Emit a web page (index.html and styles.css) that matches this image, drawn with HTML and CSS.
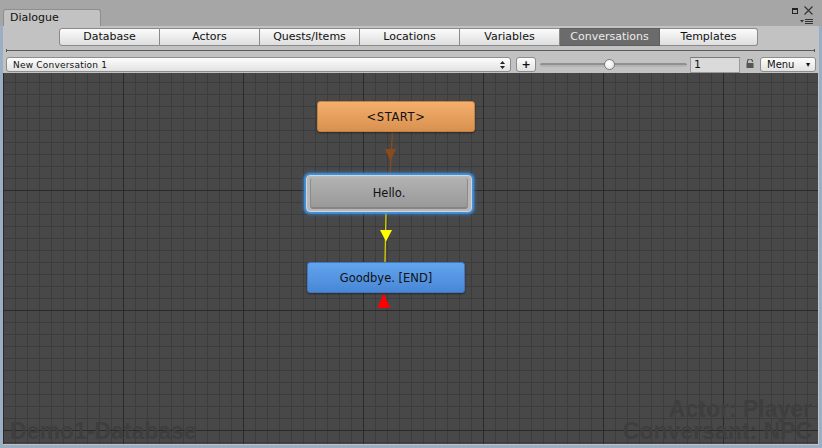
FILE: index.html
```html
<!DOCTYPE html>
<html>
<head>
<meta charset="utf-8">
<link rel="stylesheet" href="styles.css">
</head>
<body>
<div class="window">
  <div class="titlebar">
    <div class="wintab">Dialogue</div>
    <div class="winctl">
      <div class="ctl-top">
        <svg width="6" height="6" viewBox="0 0 6 6"><rect x="0.5" y="0.5" width="5" height="5" fill="none" stroke="#222"/><rect x="0" y="0" width="6" height="2" fill="#222"/></svg>
        <svg width="9" height="9" viewBox="0 0 9 9"><path d="M0.5 0.5 L8.5 8.5 M8.5 0.5 L0.5 8.5" stroke="#333" stroke-width="1.1"/></svg>
      </div>
      <div class="ctl-menu">
        <svg width="14" height="6" viewBox="0 0 14 6"><polygon points="0,1 4,1 2,3.5" fill="#333"/><rect x="5" y="0" width="8" height="1" fill="#333"/><rect x="5" y="2" width="8" height="1" fill="#333"/><rect x="5" y="4" width="8" height="1" fill="#333"/></svg>
      </div>
    </div>
  </div>
  <div class="panel">
    <div class="tabs">
      <div class="tab">Database</div>
      <div class="tab">Actors</div>
      <div class="tab">Quests/Items</div>
      <div class="tab">Locations</div>
      <div class="tab">Variables</div>
      <div class="tab selected">Conversations</div>
      <div class="tab">Templates</div>
    </div>
    <div class="sep"><div class="sepline"></div></div>
    <div class="toolbar">
      <div class="popup">
        <span>New Conversation 1</span>
        <svg width="5" height="8" viewBox="0 0 5 8"><polygon points="2.5,0 5,3 0,3" fill="#222"/><polygon points="0,5 5,5 2.5,8" fill="#222"/></svg>
      </div>
      <div class="btn plus">+</div>
      <div class="slider"><div class="track"></div><div class="thumb"></div></div>
      <div class="field">1</div>
      <div class="lock">
        <svg width="8" height="9" viewBox="0 0 8 9"><path d="M1.5 4 V2.5 A2.5 2.5 0 0 1 6.5 2.5 V3" fill="none" stroke="#555" stroke-width="1.2"/><rect x="0.5" y="4" width="7" height="5" fill="#555"/></svg>
      </div>
      <div class="btn menu"><span>Menu</span><span class="caret">▾</span></div>
    </div>
    <div class="canvas">
      <div class="node start">&lt;START&gt;</div>
      <div class="node hello"><div class="hello-inner">Hello.</div></div>
      <div class="node goodbye">Goodbye. [END]</div>
      <svg class="links" width="815" height="371" viewBox="0 0 815 371">
        <line x1="389.5" y1="59" x2="387" y2="102" stroke="#8a4a1c" stroke-width="1.3"/>
        <polygon points="382,76 393,76 387.5,88" fill="#8a4a1c"/>
        <line x1="383" y1="140" x2="382" y2="189" stroke="#d8d000" stroke-width="1.3"/>
        <polygon points="377,157 389,157 383,168.5" fill="#ffff00"/>
        <polygon points="380.7,220 374.5,235 387,235" fill="#ff0000"/>
      </svg>
      <div class="watermark wm-left">Demo1-Database</div>
      <div class="watermark wm-right">
        <div class="wm-line">Actor: Player</div>
        <div class="wm-line">Conversant: NPC</div>
      </div>
    </div>
  </div>
</div>
</body>
</html>
```

FILE: styles.css
```css
* { box-sizing: border-box; }
html, body {
  margin: 0;
  padding: 0;
  width: 822px;
  height: 448px;
  overflow: hidden;
  background: #9aaec4;
  font-family: "DejaVu Sans", Verdana, sans-serif;
  font-size: 11px;
  color: #111;
}
.window {
  width: 822px;
  height: 448px;
  display: flex;
  flex-direction: column;
}
.titlebar {
  height: 26px;
  background: #a6a6a6;
  display: flex;
  align-items: flex-end;
  padding-left: 3px;
}
.wintab {
  width: 98px;
  height: 17px;
  background: #c2c2c2;
  border: 1px solid #8e8e8e;
  border-bottom: none;
  border-radius: 3px 3px 0 0;
  padding-left: 6px;
  line-height: 16px;
  font-size: 11px;
  color: #111;
}
.winctl {
  margin-left: auto;
  width: 30px;
  height: 26px;
  display: flex;
  flex-direction: column;
  align-items: flex-end;
  padding: 6px 9px 0 0;
}
.ctl-top {
  display: flex;
  align-items: center;
  gap: 6px;
  height: 9px;
}
.ctl-top svg:first-child { margin-top: 1px; }
.ctl-menu {
  margin-top: 4px;
  margin-right: -1px;
  height: 6px;
  display: flex;
}
.panel {
  height: 419px;
  margin: 0 3px;
  background: #c2c2c2;
  display: flex;
  flex-direction: column;
  padding-bottom: 1px;
}
.tabs {
  display: flex;
  padding: 2px 0 0 56px;
  height: 20px;
}
.tab {
  width: 100px;
  height: 18px;
  line-height: 16px;
  text-align: center;
  background: linear-gradient(#fbfbfb, #dedede);
  border: 1px solid #8a8a8a;
  border-left: none;
  color: #111;
  font-size: 11px;
}
.tab:first-child {
  border-left: 1px solid #8a8a8a;
  border-radius: 3px 0 0 3px;
  width: 101px;
}
.tab:last-child {
  border-radius: 0 3px 3px 0;
  width: 98px;
}
.tab.selected {
  background: #6b6b6b;
  color: #ececec;
  border-color: #5e5e5e;
}
.sep {
  height: 7px;
  padding: 3px 4px 0 3px;
}
.sepline {
  height: 3px;
  border-left: 1px solid #555;
  border-right: 1px solid #555;
  position: relative;
}
.sepline::after {
  content: "";
  position: absolute;
  left: 0;
  right: 0;
  top: 1px;
  height: 1px;
  background: #5a5a5a;
}
.toolbar {
  height: 19px;
  display: flex;
  align-items: flex-start;
  padding: 4px 0 0 3px;
}
.popup {
  width: 505px;
  height: 15px;
  border: 1px solid #8c8c8c;
  border-radius: 3px;
  background: linear-gradient(#fdfdfd, #e2e2e2);
  display: flex;
  align-items: center;
  justify-content: space-between;
  padding: 0 5px 0 6px;
  font-size: 9px;
  letter-spacing: 0.2px;
}
.btn {
  height: 15px;
  border: 1px solid #8c8c8c;
  border-radius: 3px;
  background: linear-gradient(#fdfdfd, #e2e2e2);
  display: flex;
  align-items: center;
}
.plus {
  width: 20px;
  margin-left: 5px;
  justify-content: center;
  font-size: 11px;
  font-weight: bold;
  line-height: 13px;
}
.slider {
  width: 147px;
  height: 15px;
  margin-left: 4px;
  position: relative;
  display: flex;
  align-items: center;
}
.track {
  width: 100%;
  height: 4px;
  border-radius: 2px;
  background: #b4b4b4;
  border-top: 2px solid #8f8f8f;
}
.thumb {
  position: absolute;
  left: 64px;
  top: 2px;
  width: 11px;
  height: 11px;
  border-radius: 50%;
  background: radial-gradient(circle at 40% 35%, #ffffff, #e0e0e0);
  border: 1px solid #7c7c7c;
}
.field {
  width: 50px;
  height: 16px;
  margin-left: 3px;
  background: #dadada;
  border: 1px solid #9a9a9a;
  border-top-color: #7a7a7a;
  padding-left: 3px;
  line-height: 14px;
  font-size: 11px;
}
.lock {
  width: 20px;
  display: flex;
  justify-content: center;
  padding-top: 2px;
}
.menu {
  width: 56px;
  justify-content: space-between;
  padding: 0 5px 0 6px;
  font-size: 10px;
}
.menu .caret { font-size: 8px; }
.canvas {
  position: relative;
  flex: 1;
  margin-top: 1px;
  margin-right: 1px;
  background-color: #484848;
  background-image:
    linear-gradient(to right, #2a2a2a 1px, transparent 1px),
    linear-gradient(to bottom, #2a2a2a 1px, transparent 1px),
    linear-gradient(to right, #3c3c3c 1px, transparent 1px),
    linear-gradient(to bottom, #3c3c3c 1px, transparent 1px);
  background-size: 120px 120px, 120px 120px, 12px 12px, 12px 12px;
  background-position: 0 117px, 0 117px, 0 9px, 0 9px;
  display: flex;
  justify-content: space-between;
  align-items: flex-end;
  padding: 0 6px 2px 7px;
  overflow: hidden;
}
.node {
  position: absolute;
  display: flex;
  align-items: center;
  justify-content: center;
  font-size: 11.5px;
  color: #111;
  z-index: 2;
}
.start {
  left: 314px;
  top: 28px;
  width: 158px;
  height: 31px;
  border-radius: 3px;
  background: linear-gradient(#f5ae6b, #d9914f);
  border: 1px solid #c3813f;
  box-shadow: 0 1px 2px rgba(0,0,0,0.45);
  letter-spacing: 0.6px;
}
.hello {
  left: 303px;
  top: 102px;
  width: 166px;
  height: 37px;
  border-radius: 4px;
  background: #b8b8b8;
  border: 1px solid #d4d4d4;
  box-shadow: 0 0 2px 2px #3f95e8, 0 0 5px 2px rgba(63,149,232,0.45);
  padding: 2px 3px;
  align-items: stretch;
}
.hello-inner {
  flex: 1;
  border-radius: 3px;
  background: linear-gradient(#b2b2b2, #999999);
  border-left: 1px solid #8a8a8a;
  border-right: 1px solid #8a8a8a;
  border-bottom: 2px solid #858585;
  display: flex;
  align-items: center;
  justify-content: center;
  padding-top: 1px;
}
.goodbye {
  left: 304px;
  top: 189px;
  width: 158px;
  height: 31px;
  border-radius: 3px;
  background: linear-gradient(#62a4ee, #4887d6);
  border: 1px solid #3f78c0;
  box-shadow: 0 1px 2px rgba(0,0,0,0.45);
}
.links {
  position: absolute;
  left: 0;
  top: 0;
  z-index: 1;
}
.watermark {
  font-family: "Liberation Sans", Arial, sans-serif;
  font-weight: bold;
  font-size: 23px;
  line-height: 22px;
  color: #3e3e3e;
  position: relative;
  z-index: 0;
}
.wm-right { text-align: right; }
.wm-line { height: 22px; }
```
